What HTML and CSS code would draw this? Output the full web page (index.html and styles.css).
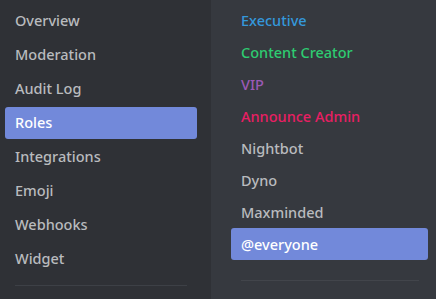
FILE: index.html
```html
<!DOCTYPE html>
<html>
<head>
<meta charset="utf-8">
<link rel="stylesheet" href="styles.css">
</head>
<body>
<div class="app">
  <nav class="sidebar">
    <div class="nav-item">Overview</div>
    <div class="nav-item">Moderation</div>
    <div class="nav-item">Audit Log</div>
    <div class="nav-item active">Roles</div>
    <div class="nav-item">Integrations</div>
    <div class="nav-item">Emoji</div>
    <div class="nav-item">Webhooks</div>
    <div class="nav-item">Widget</div>
    <div class="sep sep-left"></div>
  </nav>
  <main class="roles">
    <div class="role r-exec">Executive</div>
    <div class="role r-cc">Content Creator</div>
    <div class="role r-vip">VIP</div>
    <div class="role r-admin">Announce Admin</div>
    <div class="role">Nightbot</div>
    <div class="role">Dyno</div>
    <div class="role">Maxminded</div>
    <div class="role active">@everyone</div>
    <div class="sep sep-right"></div>
  </main>
</div>
</body>
</html>
```
FILE: styles.css
```css
html, body {
  margin: 0;
  padding: 0;
  height: 100%;
}
body {
  font-family: "Noto Sans", sans-serif;
  font-size: 14.5px;
  font-weight: 500;
  color: #b9bbbe;
  background: #36393f;
}
.app {
  display: flex;
  height: 299px;
  overflow: hidden;
}
.sidebar {
  width: 211px;
  background: #2f3136;
  padding: 5px 14px 0 5px;
  box-sizing: border-box;
  display: flex;
  flex-direction: column;
  gap: 2px;
}
.nav-item {
  height: 32px;
  line-height: 31px;
  padding-left: 10px;
  border-radius: 3px;
  white-space: nowrap;
}
.nav-item.active {
  background: #7289da;
  color: #fff;
}
.sep {
  height: 1px;
  background: #3d4046;
}
.sep-left {
  margin: 8px 10px 0 10px;
}
.roles {
  flex: 1;
  padding: 4px 8px 0 20px;
  display: flex;
  flex-direction: column;
}
.role {
  height: 32px;
  line-height: 32px;
  padding-left: 10px;
  border-radius: 3px;
  white-space: nowrap;
}
.role.active {
  background: #7289da;
  color: #fff;
}
.r-exec { color: #3498db; }
.r-cc { color: #2ecc71; }
.r-vip { color: #9b59b6; }
.r-admin { color: #e91e63; }
.sep-right {
  margin: 20px 9px 0 10px;
  background: #42454b;
}
```
